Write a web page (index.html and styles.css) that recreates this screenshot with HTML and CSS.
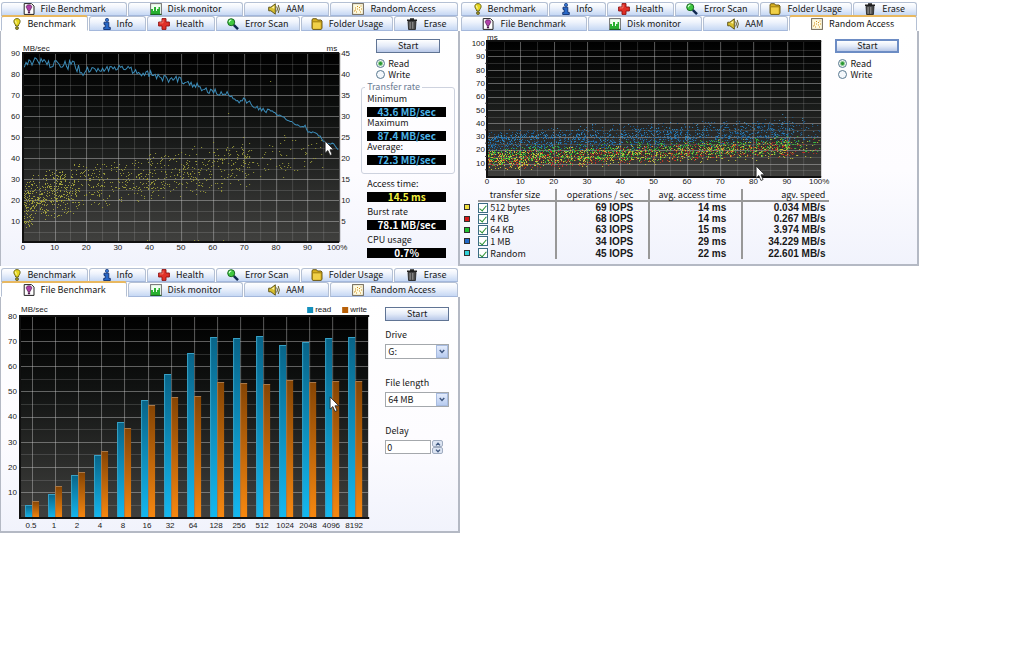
FILE: index.html
```html
<!DOCTYPE html>
<html lang="en">
<head>
<meta charset="utf-8">
<title>Disk benchmark</title>
<link rel="stylesheet" href="styles.css">
</head>
<body>
<svg class="defs" aria-hidden="true">
  <symbol id="i-bench" viewBox="0 0 8 12"><path d="M4 .6C1.9.6.7 2 .9 3.7 1.1 5.6 2.4 6 2.7 8h2.6c.3-2 1.600-2.400 1.800-4.300C7.300 2 6.100.6 4 .6z" fill="#e8d820" stroke="#5c5810" stroke-width=".9"/><path d="M2.500 2.600l.8 3" stroke="#fffcc0"/><rect x="2.600" y="8.800" width="2.800" height="2.600" rx="1" fill="#a89c28" stroke="#44400c" stroke-width=".8"/></symbol>
  <symbol id="i-info" viewBox="0 0 8 12"><circle cx="4" cy="1.900" r="1.600" fill="#3478d8" stroke="#103070" stroke-width=".7"/><path d="M1 4.200h4.800v5.200h1.500v2.100H.7V9.400h1.500v-3H1z" fill="#2868c8" stroke="#103070" stroke-width=".9"/></symbol>
  <symbol id="i-health" viewBox="0 0 12 12"><path d="M4 .6h4v3.400h3.400v4H8v3.400H4V8H.6V4H4z" fill="#e03028" stroke="#8c1010" stroke-width=".9"/><path d="M5 1.700v3.200H1.600" fill="none" stroke="#f88878" stroke-width=".8"/></symbol>
  <symbol id="i-scan" viewBox="0 0 12 12"><path d="M6.700 6.800l4.300 4.400" stroke="#102850" stroke-width="2.400"/><circle cx="4.200" cy="4.200" r="3.500" fill="#40c840" stroke="#186820" stroke-width="1"/><path d="M2.300 4.200c0-1.200.8-2 2-2" fill="none" stroke="#d0ffd0" stroke-width="1.200"/></symbol>
  <symbol id="i-folder" viewBox="0 0 12 12"><path d="M1 3.200V1.500L2 .7h3.500l1 1.300H10l1 1v7.500l-1 .9H2l-1-.9z" fill="#d8b020" stroke="#604c08" stroke-width=".9"/><path d="M2 4.200h7.500v6.500H2z" fill="#f0d048"/><path d="M2 3.800h8.500" stroke="#8c7010" stroke-width=".7"/></symbol>
  <symbol id="i-erase" viewBox="0 0 12 12"><path d="M1 2.300h10M4 1h4" stroke="#222" stroke-width="1.400"/><path d="M2 3.200h8l-.6 8.300H2.600z" fill="#484848" stroke="#1c1c1c" stroke-width=".8"/><path d="M4.100 4v6.800M6.800 4v6.800" stroke="#b0b0b0" stroke-width=".8"/></symbol>
  <symbol id="i-file" viewBox="0 0 12 12"><path d="M1.200.6H8.500l2.500 2.500v8.300H1.200z" fill="#fff" stroke="#222" stroke-width="1"/><path d="M6 1.800c-2 0-3 1.200-2.700 2.500C3.500 5.300 4.600 6 4.900 7.500h2.200C7.400 6 8.500 5.300 8.700 4.300 9 3 8 1.800 6 1.800z" fill="#b040a8" stroke="#501850" stroke-width=".7"/><rect x="4.900" y="8.300" width="2.200" height="2" fill="#501850"/></symbol>
  <symbol id="i-disk" viewBox="0 0 12 12"><rect x=".6" y=".6" width="10.800" height="10.800" fill="#f0fff0" stroke="#707070"/><path d="M1 11V6h2v2h1V4h2v4h1V6h1.500V4H10v7z" fill="#28b030"/><path d="M.5 11.400h11" stroke="#106018"/></symbol>
  <symbol id="i-aam" viewBox="0 0 12 12"><path d="M.7 4.200h2.200L7.300.8v10.400L2.900 7.800H.7z" fill="#d8c030" stroke="#54480c" stroke-width=".9"/><path d="M3.500 4.800l2.800-2v3z" fill="#fff4a0"/><path d="M8.700 3.500q1.500 2.500 0 5M10.200 2q2.300 4 0 8" fill="none" stroke="#54480c" stroke-width=".9"/></symbol>
  <symbol id="i-random" viewBox="0 0 12 12"><rect x=".6" y=".6" width="10.800" height="10.800" fill="#fffbe0" stroke="#706858"/><path d="M2 8h1M3 5h1M4 9h1M5 6h1M5 3.500h1M7 7h1M7 4.500h1M8.500 3h1M9 6h1M3 7h1M8 9h1" stroke="#d09020" stroke-width="1.200"/></symbol>
  <symbol id="i-cursor" viewBox="0 0 10 16"><path d="M.7.8v11.500l2.600-2.400 2 4.600 2-.9-2-4.400h3.500z" fill="#fff" stroke="#222" stroke-width=".8"/></symbol>
  <symbol id="i-down" viewBox="0 0 8 6"><path d="M1 1l3 3.200L7 1" fill="none" stroke="#405880" stroke-width="2"/></symbol>
</svg>

<main class="board">
  <section class="panel panel-bench" aria-label="Benchmark">
    <div class="tabs" role="tablist">
      <div class="tab-row row-long" data-tabs="file disk aam random"></div>
      <div class="tab-row row-short" data-tabs="bench* info health scan folder erase"></div>
    </div>
    <div class="content content-bench">
      <svg class="chart" id="chart-bench" viewBox="8 42 352 212" role="img" aria-label="Transfer rate and access time"></svg>
      <form class="side">
        <button type="button" class="start">Start</button>
        <div class="modes">
          <label><input type="radio" name="mode1" checked>Read</label>
          <label><input type="radio" name="mode1">Write</label>
        </div>
        <fieldset class="rates">
          <legend>Transfer rate</legend>
          <label for="min">Minimum</label><output id="min" class="rate">43.6 MB/sec</output>
          <label for="max">Maximum</label><output id="max" class="rate">87.4 MB/sec</output>
          <label for="avg">Average:</label><output id="avg" class="rate">72.3 MB/sec</output>
        </fieldset>
        <div class="stats">
          <label for="acc">Access time:</label><output id="acc" class="access">14.5 ms</output>
          <label for="burst">Burst rate</label><output id="burst">78.1 MB/sec</output>
          <label for="cpu">CPU usage</label><output id="cpu">0.7%</output>
        </div>
      </form>
    </div>
  </section>

  <section class="panel panel-random" aria-label="Random Access">
    <div class="tabs" role="tablist">
      <div class="tab-row row-short" data-tabs="bench info health scan folder erase"></div>
      <div class="tab-row row-long" data-tabs="file disk aam random*"></div>
    </div>
    <div class="content content-random">
      <div class="results">
        <svg class="chart" id="chart-random" viewBox="464 33 369 153" role="img" aria-label="Random access times"></svg>
        <table class="sizes">
          <colgroup><col class="c-key"><col class="c-size"><col class="c-ops"><col class="c-time"><col class="c-speed"></colgroup>
          <thead><tr><td></td><th>transfer size</th><th>operations / sec</th><th>avg. access time</th><th>agv. speed</th></tr></thead>
          <tbody>
            <tr><td><i class="swatch yellow"></i></td><th><label><input type="checkbox" checked>512 bytes</label></th><td>69 IOPS</td><td>14 ms</td><td>0.034 MB/s</td></tr>
            <tr><td><i class="swatch red"></i></td><th><label><input type="checkbox" checked>4 KB</label></th><td>68 IOPS</td><td>14 ms</td><td>0.267 MB/s</td></tr>
            <tr><td><i class="swatch green"></i></td><th><label><input type="checkbox" checked>64 KB</label></th><td>63 IOPS</td><td>15 ms</td><td>3.974 MB/s</td></tr>
            <tr><td><i class="swatch blue"></i></td><th><label><input type="checkbox" checked>1 MB</label></th><td>34 IOPS</td><td>29 ms</td><td>34.229 MB/s</td></tr>
            <tr><td><i class="swatch cyan"></i></td><th><label><input type="checkbox" checked>Random</label></th><td>45 IOPS</td><td>22 ms</td><td>22.601 MB/s</td></tr>
          </tbody>
        </table>
      </div>
      <form class="side">
        <button type="button" class="start focused">Start</button>
        <div class="modes">
          <label><input type="radio" name="mode2" checked>Read</label>
          <label><input type="radio" name="mode2">Write</label>
        </div>
      </form>
    </div>
  </section>

  <section class="panel panel-file" aria-label="File Benchmark">
    <div class="tabs" role="tablist">
      <div class="tab-row row-short" data-tabs="bench info health scan folder erase"></div>
      <div class="tab-row row-long" data-tabs="file* disk aam random"></div>
    </div>
    <div class="content content-file">
      <svg class="chart" id="chart-file" viewBox="5 303 367 228" role="img" aria-label="Read and write speed by block size"></svg>
      <form class="side">
        <button type="button" class="start">Start</button>
        <div class="field">
          <label for="drive">Drive</label>
          <span class="select"><select id="drive"><option>G:</option></select><svg class="drop" aria-hidden="true"><use href="#i-down"/></svg></span>
        </div>
        <div class="field">
          <label for="length">File length</label>
          <span class="select"><select id="length"><option>64 MB</option></select><svg class="drop" aria-hidden="true"><use href="#i-down"/></svg></span>
        </div>
        <div class="field">
          <label for="delay">Delay</label>
          <span class="spin"><input id="delay" type="number" value="0"><span class="steps"><button type="button" aria-label="Increase"><svg class="up"><use href="#i-down"/></svg></button><button type="button" aria-label="Decrease"><svg><use href="#i-down"/></svg></button></span></span>
        </div>
      </form>
    </div>
  </section>
</main>
<script src="charts.js"></script>
</body>
</html>
```
FILE: styles.css
```css
* { box-sizing: border-box; }
body { margin: 0; background: #fff; color: #181818; font: 9px/12px "Noto Sans CJK JP", "Liberation Sans", sans-serif; }
button, input, select { font: inherit; color: inherit; margin: 0; padding: 0; }
.defs { position: absolute; width: 0; height: 0; }

.board { display: grid; grid-template-columns: 460fr 458fr; width: 89.7%; align-items: start; }
.panel { display: flex; flex-direction: column; }
.panel-bench { grid-area: 1 / 1; }
.panel-random { grid-area: 1 / 2; }
.panel-file { grid-area: 2 / 1; }

.tabs { padding: 2px 2px 0 1px; }
.tab-row { display: grid; gap: 1px; height: 14px; }
.row-long { grid-template-columns: 126fr 114fr 85fr 128fr; }
.row-short { grid-template-columns: 87fr 57fr 67fr 84fr 92fr 64fr; }
.tab-row + .tab-row { height: 15px; }
.tab { display: flex; align-items: center; justify-content: center; gap: 6px; min-width: 0; border: 1px solid #b4c0d4; border-bottom-color: #a4b8dc; border-radius: 3px 3px 0 0; background: linear-gradient(#fff, #eef3fc 40%, #c6d8f4); white-space: nowrap; line-height: 12px; overflow: visible; }
.tab svg { width: 12px; height: 12px; flex: none; }
.tab svg.thin { width: 8px; }
.tab-row + .tab-row .tab { padding-top: 1px; }
.tab-row .tab.active { margin-top: -1px; padding: 0; border-color: transparent #b4c0d4 transparent #b4c0d4; border-top: 2px solid #e8b860; background: #fff; }

.content { display: grid; border: solid #b4b9c4; border-width: 0 2px 2px 1px; background: linear-gradient(#fff, #fdfcff 60%, #f1f3fc); }
.content-bench { grid-template-columns: 359fr 98fr; padding-bottom: 8px; border-bottom: 0; }
.content-random { grid-template-columns: 373fr 83fr; padding-bottom: 5px; border-left: 0; }
.content-file { grid-template-columns: 371fr 86fr; }
.chart { display: block; width: 100%; font: 8px "Liberation Sans", sans-serif; }
#chart-bench { padding-left: 7px; margin-top: 11px; }
#chart-random { margin-top: 2px; padding-left: 4px; }
#chart-file { margin-top: 6px; padding-left: 4px; }

.side { padding-top: 8px; }
.start { display: block; width: 64px; height: 14px; border: 1px solid #607494; background: linear-gradient(#fff, #e4ebf8 50%, #b8c8e8); line-height: 10px; }
.start.focused { border: 2px solid #6c8cc4; line-height: 8px; }
.modes { display: flex; flex-direction: column; padding: 5px 0 2px 3px; }
.modes label { display: flex; align-items: center; gap: 3px; height: 11px; }
.modes input { appearance: none; width: 9px; height: 9px; border: 1px solid #587890; border-radius: 50%; background: #f4f8fc; }
.modes input:checked { background: radial-gradient(circle, #289830 0 1px, #eef8ee 3px); }
.content-bench .start { margin-left: 16px; }
.content-bench .modes { padding-left: 16px; }
.rates { min-width: 0; margin: 0 3px 0 1px; padding: 1px 8px 8px 5px; border: 1px solid #cdd2de; border-radius: 3px; }
.rates legend { padding: 0 2px; margin-left: -2px; color: #6c7c94; line-height: 10px; }
.rates label, .stats label { display: block; line-height: 12px; }
output { display: block; margin-top: 2px; background: #000; color: #fff; font-weight: bold; font-size: 10px; line-height: 10px; height: 10px; text-align: center; }
.rate { color: #4cb4e8; }
.access { color: #f4f040; }
.stats { padding: 0 12px 0 7px; }
.stats label { margin-top: 4px; }

.sizes { width: calc(100% - 8px); margin-left: 4px; margin-top: 3px; border-collapse: collapse; table-layout: fixed; }
.c-key { width: 14px; }
.c-size { width: 78px; }
.c-ops, .c-time { width: 93px; }
.sizes th, .sizes td { padding: 0; height: 11px; line-height: 11px; text-align: right; font-weight: normal; white-space: nowrap; }
.sizes thead th { border-bottom: 2px solid #989898; height: 12px; padding-right: 15px; }
.sizes tbody td { font-family: "Liberation Sans", sans-serif; font-weight: bold; font-size: 10px; padding-right: 15px; }
.sizes th:nth-child(n+3), .sizes td:nth-child(n+3) { border-left: 2px solid #989898; }
.sizes thead th:last-child, .sizes tbody td:last-child { padding-right: 4px; }
.sizes tbody td:first-child { padding: 0; text-align: left; }
.sizes tbody tr:nth-child(n+4) > * { height: 12px; }
.sizes label { display: flex; align-items: center; gap: 2px; }
.sizes input { appearance: none; display: grid; place-items: center; width: 10px; height: 10px; border: 1px solid #3c6c84; background: #fff; }
.sizes input:checked::before { content: ""; width: 3px; height: 6px; border: solid #289030; border-width: 0 1px 1px 0; transform: rotate(40deg); }
.swatch { display: block; width: 6px; height: 6px; border: 1px solid #303030; }
.yellow { background: #f0e040; }
.red { background: #d81818; }
.green { background: #20c030; }
.blue { background: #2068c8; }
.cyan { background: #30d0d8; }
.content-random .side { padding-left: 2px; }

.content-file .side { padding: 10px 8px 0 13px; }
.field { margin-top: 8px; }
.field + .field { margin-top: 18px; }
.field > label { display: block; margin-bottom: 3px; }
.select { display: block; position: relative; }
.select select { display: block; appearance: none; width: 64px; height: 15px; padding-left: 2px; border: 1px solid #a4a8ac; border-radius: 0; background: #fff; line-height: 12px; }
.drop { position: absolute; left: 51px; top: 1px; width: 12px; height: 13px; padding: 2px; border: 1px solid #a8bce0; background: linear-gradient(#e4ecfc, #b8ccf0); pointer-events: none; }
.spin { display: flex; gap: 1px; }
.spin input { appearance: textfield; width: 46px; height: 14px; padding-left: 1px; border: 1px solid #a4a8ac; background: #fff; }
.steps { display: flex; flex-direction: column; }
.steps button { display: grid; place-items: center; width: 11px; height: 7px; border: 1px solid #a0acc0; border-radius: 2px; background: #dce4f2; }
.steps svg { width: 6px; height: 4px; }
.steps .up { transform: rotate(180deg); }

.chart text { fill: #202020; }
.major { stroke: #c8c8c8; stroke-opacity: .45; }
.minor { stroke: #c0c0c0; stroke-opacity: .2; }
.frame { stroke: #101010; stroke-width: 2; fill: none; }
.tick { stroke: #404040; }
.end { text-anchor: end; }
.mid { text-anchor: middle; }
.line { fill: none; stroke: #3c8cb8; }
.dots { fill: none; stroke-width: 1; }
```
FILE: charts.js
```js
const TABS = {
  bench: 'Benchmark', info: 'Info', health: 'Health', scan: 'Error Scan', folder: 'Folder Usage', erase: 'Erase',
  file: 'File Benchmark', disk: 'Disk monitor', aam: 'AAM', random: 'Random Access'
};
document.querySelectorAll('.tab-row').forEach(row => {
  row.innerHTML = row.dataset.tabs.split(' ').map(key => {
    const active = key.endsWith('*');
    const id = key.replace('*', '');
    const thin = id === 'bench' || id === 'info' ? 'thin' : '';
    return `<button type="button" role="tab" aria-selected="${active}" class="tab${active ? ' active' : ''}"><svg class="${thin}" aria-hidden="true"><use href="#i-${id}"/></svg>${TABS[id]}</button>`;
  }).join('');
});

let seed = 20;
function rand() {
  seed = (seed * 1664525 + 1013904223) % 4294967296;
  return seed / 4294967296;
}
function at(points, x) {
  let i = 1;
  while (i < points.length - 1 && points[i][0] < x) i++;
  const [x0, y0] = points[i - 1], [x1, y1] = points[i];
  return y0 + (y1 - y0) * (x - x0) / (x1 - x0);
}
const vline = (x, y0, y1, c) => `<path class="${c}" d="M${Math.round(x) + .5} ${y0}V${y1}"/>`;
const hline = (y, x0, x1, c) => `<path class="${c}" d="M${x0} ${Math.round(y) + .5}H${x1}"/>`;
const text = (x, y, s, c = '') => `<text x="${x}" y="${y}" class="${c}">${s}</text>`;
const cursor = (x, y) => `<use href="#i-cursor" x="${x}" y="${y}" width="11" height="17"/>`;
function backdrop(id, x, y, w, h) {
  return `<defs><linearGradient id="${id}" x2="0" y2="1"><stop offset="0" stop-color="#000"/><stop offset=".35" stop-color="#101211"/><stop offset="1" stop-color="#40403e"/></linearGradient></defs><rect x="${x}" y="${y}" width="${w}" height="${h}" fill="url(#${id})"/>`;
}
function dots(n, x0, x1, bias, top, bottom, color) {
  let d = '';
  for (let i = 0; i < n; i++) {
    const x = x0 + (x1 - x0) * Math.pow(rand(), bias);
    const a = at(top, x), b = at(bottom, x);
    const y = a + (b - a) * (rand() * .65 + rand() * .35);
    d += `M${Math.floor(x)} ${Math.floor(y) + .5}h1`;
  }
  return `<path class="dots" stroke="${color}" d="${d}"/>`;
}

function benchChart() {
  let s = backdrop('bg1', 23, 53, 316, 189);
  for (let i = 1; i < 20; i++) s += vline(23 + i * 15.8, 53, 242, i % 2 ? 'minor' : 'major');
  for (let i = 1; i < 18; i++) s += hline(53 + i * 10.5, 23, 339, i % 2 ? 'minor' : 'major');
  const top = [[23, 178], [40, 172], [80, 158], [130, 153], [190, 143], [250, 136], [320, 131], [339, 145]];
  const low = [[23, 222], [50, 221], [80, 216], [120, 208], [170, 200], [240, 192], [290, 180], [339, 165]];
  s += dots(760, 24, 250, 1.2, top, low, '#98983a');
  s += dots(190, 24, 80, 1, top, low, '#a4a43c');
  s += dots(75, 240, 325, 1.2, top, low, '#98983a');
  s += dots(22, 24, 33, 1, [[23, 215], [33, 215]], [[23, 230], [33, 230]], '#a4a43c');
  s += '<path class="dots" stroke="#98983a" d="M270 81.500h1M228 113.500h1M147 240.500h1M194 240.500h1M198 240.500h1M223 240.500h1"/>';
  const curve = [[23, 70], [25, 62], [45, 61], [55, 65], [70, 66], [85, 70], [105, 69], [128, 67], [135, 72], [150, 74], [165, 79], [180, 79], [192, 85], [205, 89], [215, 92], [228, 94], [234, 101], [245, 100], [262, 110], [275, 113], [288, 120], [300, 126], [306, 126], [307, 132], [316, 132], [321, 138], [326, 144], [332, 143], [339, 150]];
  let line = '';
  for (let x = 23; x <= 339; x += 1.5) {
    const amp = x < 60 ? 10 : x < 87 ? 13 : x < 130 ? 5 : x < 230 ? 7 : x < 275 ? 5 : 2;
    line += `${line ? 'L' : 'M'}${x} ${(at(curve, x) + (rand() - .5) * amp).toFixed(1)}`;
  }
  s += `<path class="line" d="${line}"/><path class="frame" d="M339 53H23V242H339"/><path class="tick" d="M339.500 53V242"/>`;
  s += text(23, 51, 'MB/sec') + text(337, 51, 'ms', 'end');
  for (let v = 10; v <= 90; v += 10) {
    const y = 245 - v * 2.1;
    s += text(20, y, v, 'end') + text(341, y, v / 2);
  }
  for (let i = 0; i < 10; i++) s += text(23 + i * 31.6, 250, i * 10, 'mid');
  s += text(337, 250, '100%', 'mid') + cursor(324, 140);
  document.getElementById('chart-bench').innerHTML = s;
}

function randomChart() {
  let s = backdrop('bg2', 487, 41, 334, 136);
  for (let i = 1; i < 20; i++) s += vline(487 + i * 16.65, 41, 177, i % 2 ? 'minor' : 'major');
  for (let i = 1; i < 20; i++) s += hline(43 + i * 6.7, 487, 821, i % 2 ? 'minor' : 'major');
  const band = (a, b, c, d) => [[[487, a], [821, c]], [[487, b], [821, d]]];
  const layer = (n, b, color) => dots(n, 488, 790, 1.15, b[0], b[1], color) + dots(n / 28, 785, 820, 1, b[0], b[1], color);
  s += layer(950, band(129, 157, 115, 147), '#1c5c90');
  s += layer(550, band(131, 152, 121, 146), '#2c80b8');
  s += layer(750, band(151, 171, 137, 157), '#c03424');
  s += layer(850, band(147, 168, 134, 155), '#38b83c');
  s += layer(700, band(150, 172, 136, 158), '#c4c43c');
  s += dots(90, 488, 815, .6, [[487, 130], [821, 110]], [[487, 140], [821, 140]], '#3c88b8');
  s += '<path class="frame" d="M821 41H487V177H821"/>';
  s += text(487, 40, 'ms');
  for (let v = 10; v <= 100; v += 10) {
    s += text(485, 179 - v * 1.33, v, 'end') + `<path class="tick" d="M485 ${183 - v * 1.33}h2"/>`;
  }
  for (let i = 0; i < 10; i++) s += text(487 + i * 33.3, 184, i * 10, 'mid');
  s += text(819, 184, '100%', 'mid') + cursor(755, 165);
  document.getElementById('chart-random').innerHTML = s;
}

function fileChart() {
  const sizes = ['0.5', 1, 2, 4, 8, 16, 32, 64, 128, 256, 512, 1024, 2048, 4096, 8192];
  const read = [505, 494, 475, 455, 422, 400, 374, 353, 337, 338, 336, 345, 342, 338, 337];
  const write = [501, 486, 472, 451, 428, 405, 397, 396, 382, 383, 384, 380, 382, 381, 381];
  let s = backdrop('bg3', 20, 316, 348, 202);
  s += '<defs><linearGradient id="rd" x2="0" y2="1"><stop offset="0" stop-color="#086488"/><stop offset="1" stop-color="#14b8f0"/></linearGradient><linearGradient id="wr" x2="0" y2="1"><stop offset="0" stop-color="#844404"/><stop offset="1" stop-color="#f88810"/></linearGradient></defs>';
  for (let i = 1; i < 16; i++) s += hline(316 + i * 12.58, 20, 368, i % 2 ? 'minor' : 'major');
  sizes.forEach((size, i) => {
    const x = Math.round(32 + i * 23.1);
    s += vline(x, 317, 521, 'major');
    s += `<rect x="${x - 7}" y="${read[i]}" width="7" height="${518 - read[i]}" fill="url(#rd)"/><rect x="${x}" y="${write[i]}" width="7" height="${518 - write[i]}" fill="url(#wr)"/>`;
    s += `<path d="M${x - 6.500} 518V${read[i] + .5}H${x}" fill="none" stroke="#38a0c4" stroke-width="1"/><path d="M${x + .5} 518V${write[i] + .5}H${x + 7}" fill="none" stroke="#a87848" stroke-width="1"/>`;
    s += text(x - 1, 528, size, 'mid');
  });
  s += '<path class="frame" d="M369 316H20V518H369"/>';
  for (let v = 10; v <= 80; v += 10) s += text(17, 520 - v * 2.515, v, 'end');
  s += text(21, 312, 'MB/sec');
  s += '<rect x="307" y="307" width="6" height="6" fill="#1490bc"/><rect x="342" y="307" width="6" height="6" fill="#b86008"/>';
  s += text(315, 312, 'read') + text(350, 312, 'write') + cursor(329, 396);
  document.getElementById('chart-file').innerHTML = s;
}

benchChart();
randomChart();
fileChart();
```
